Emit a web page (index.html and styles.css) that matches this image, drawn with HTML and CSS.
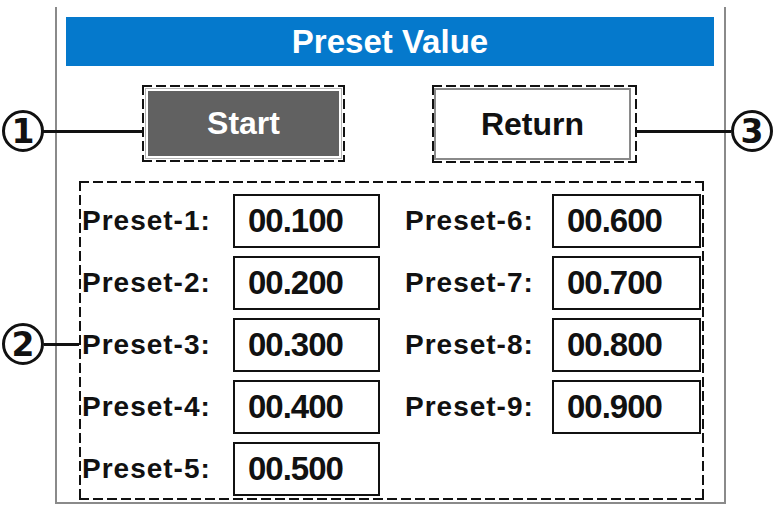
FILE: index.html
```html
<!DOCTYPE html>
<html lang="en">
<head>
    <meta charset="UTF-8">
    <title>Preset Value</title>
    <link rel="stylesheet" href="styles.css">
</head>
<body>
    <div class="page">
        <div class="frame">
            <div class="titre">Preset Value</div>

            <div class="boutons">
                <div class="pointille depart">
                    <button class="btn btn-start">Start</button>
                </div>
                <div class="pointille retour">
                    <button class="btn btn-return">Return</button>
                </div>
            </div>

            <div class="pointille groupe">
                <div class="colonne gauche">
                    <div class="ligne"><span class="etiquette">Preset-1:</span><span class="valeur">00.100</span></div>
                    <div class="ligne"><span class="etiquette">Preset-2:</span><span class="valeur">00.200</span></div>
                    <div class="ligne"><span class="etiquette">Preset-3:</span><span class="valeur">00.300</span></div>
                    <div class="ligne"><span class="etiquette">Preset-4:</span><span class="valeur">00.400</span></div>
                    <div class="ligne"><span class="etiquette">Preset-5:</span><span class="valeur">00.500</span></div>
                </div>
                <div class="colonne droite">
                    <div class="ligne"><span class="etiquette">Preset-6:</span><span class="valeur">00.600</span></div>
                    <div class="ligne"><span class="etiquette">Preset-7:</span><span class="valeur">00.700</span></div>
                    <div class="ligne"><span class="etiquette">Preset-8:</span><span class="valeur">00.800</span></div>
                    <div class="ligne"><span class="etiquette">Preset-9:</span><span class="valeur">00.900</span></div>
                </div>
            </div>
        </div>

        <!-- reperes -->
        <div class="trait trait-1"></div>
        <div class="trait trait-2"></div>
        <div class="trait trait-3"></div>
        <div class="repere repere-1">1</div>
        <div class="repere repere-2">2</div>
        <div class="repere repere-3">3</div>
    </div>
</body>
</html>
```

FILE: styles.css
```css
body {
    margin: 0;
    background: #fff;
    font-family: "Liberation Sans", Arial, sans-serif;
    font-weight: bold;
    color: #111;
}

.page {
    position: relative;
    width: 780px;
    height: 513px;
}

.frame {
    box-sizing: border-box;
    margin-left: 55px;
    margin-top: 7px;
    width: 671px;
    height: 497px;
    border: 2px solid #8a8a8a;
    border-top: none;
    padding: 10px 10px 0 9px;
}

.titre {
    height: 49px;
    background: #0579cc;
    color: #fff;
    font-size: 33px;
    line-height: 50px;
    text-align: center;
}

/* longs tirets, plus proches du dessin que border: dashed */
.pointille {
    box-sizing: border-box;
    border: 2px solid transparent;
    background:
        linear-gradient(90deg, #111 10px, transparent 10px) left top / 14px 2px repeat-x,
        linear-gradient(90deg, #111 10px, transparent 10px) left bottom / 14px 2px repeat-x,
        linear-gradient(180deg, #111 10px, transparent 10px) left top / 2px 14px repeat-y,
        linear-gradient(180deg, #111 10px, transparent 10px) right top / 2px 14px repeat-y;
    background-origin: border-box;
}

.boutons {
    display: flex;
    margin-top: 19px;
    padding-left: 76px;
    gap: 87px;
}

.depart {
    width: 203px;
    height: 77px;
    padding: 1px;
}

.retour {
    width: 205px;
    height: 78px;
    padding: 1px 4px 1px 0;
}

.btn {
    display: block;
    width: 100%;
    height: 100%;
    margin: 0;
    font-family: "Liberation Sans", Arial, sans-serif;
    font-weight: bold;
    font-size: 32px;
    cursor: pointer;
}

.btn-start {
    background: #616161;
    color: #fff;
    border: 1px solid #b4b4b4;
    box-shadow: inset 0 0 0 2px #fff;
}

.btn-return {
    background: #fff;
    color: #111;
    border: 2px solid #8a8a8a;
}

.groupe {
    display: flex;
    margin-top: 18px;
    margin-left: 13px;
    width: 625px;
    height: 319px;
    padding: 11px 0 0 1px;
}

.colonne {
    display: flex;
    flex-direction: column;
    gap: 8px;
}

.droite {
    margin-left: 25px;
}

.ligne {
    display: flex;
    align-items: center;
    height: 54px;
}

.etiquette {
    width: 151px;
    font-size: 28px;
    letter-spacing: 1px;
}

.droite .etiquette {
    width: 147px;
}

.valeur {
    box-sizing: border-box;
    width: 147px;
    height: 54px;
    border: 2px solid #111;
    background: #fff;
    padding-left: 13px;
    font-size: 33px;
    letter-spacing: -1px;
    line-height: 50px;
}

.droite .valeur {
    width: 149px;
}

.trait {
    position: absolute;
    height: 3px;
    background: #111;
}

.trait-1 { left: 43px; top: 123px; width: 100px; }
.trait-2 { left: 44px; top: 336px; width: 35px; }
.trait-3 { left: 637px; top: 123px; width: 94px; }

.repere {
    position: absolute;
    box-sizing: border-box;
    width: 42px;
    height: 42px;
    border: 3px solid #111;
    border-radius: 50%;
    background: #fff;
    font-family: "DejaVu Sans", sans-serif;
    font-size: 33px;
    line-height: 37px;
    text-align: center;
}

.repere-1 { left: 2px; top: 103px; }
.repere-2 { left: 2px; top: 316px; }
.repere-3 { left: 731px; top: 103px; }
```
